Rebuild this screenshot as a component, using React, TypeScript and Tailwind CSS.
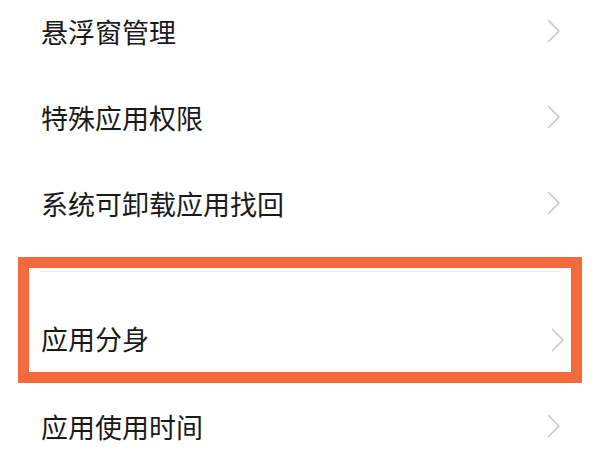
import React from "react";

const font = { fontFamily: '"Noto Sans CJK SC", "Noto Sans", sans-serif' };

function Chevron() {
  return (
    <svg width="14" height="24" viewBox="0 0 14 24" fill="none" className="shrink-0">
      <path d="M1.5 1.5 L12 12 L1.5 22.5" stroke="#c9c9c9" strokeWidth="1.7" strokeLinecap="round" strokeLinejoin="round" />
    </svg>
  );
}

function Row({ label }: { label: string }) {
  return (
    <div className="flex h-[86px] items-center justify-between pl-[41px] pr-[39px]">
      <span className="text-[27px] leading-none text-[#1a1a1a]">{label}</span>
      <Chevron />
    </div>
  );
}

export default function App() {
  const top = ["悬浮窗管理", "特殊应用权限", "系统可卸载应用找回"];

  return (
    <div className="h-[450px] w-[600px] overflow-hidden bg-white" style={font}>
      <div className="-mt-[12px]">
        {top.map((t) => (
          <Row key={t} label={t} />
        ))}

        <div className="mx-[18px] mt-[11px] border-[11px] border-[#f36b3d]">
          <div className="mx-[11px] mt-[3px] h-px bg-[#ececec]" />
          <div className="flex h-[100px] items-end justify-between pb-[20px] pl-[12px] pr-[6px]">
            <span className="text-[27px] leading-none text-[#1a1a1a]">应用分身</span>
            <Chevron />
          </div>
        </div>

        <div className="flex h-[86px] items-center justify-between pl-[41px] pr-[39px]">
          <span className="text-[27px] leading-none text-[#1a1a1a]">应用使用时间</span>
          <Chevron />
        </div>
      </div>
    </div>
  );
}
